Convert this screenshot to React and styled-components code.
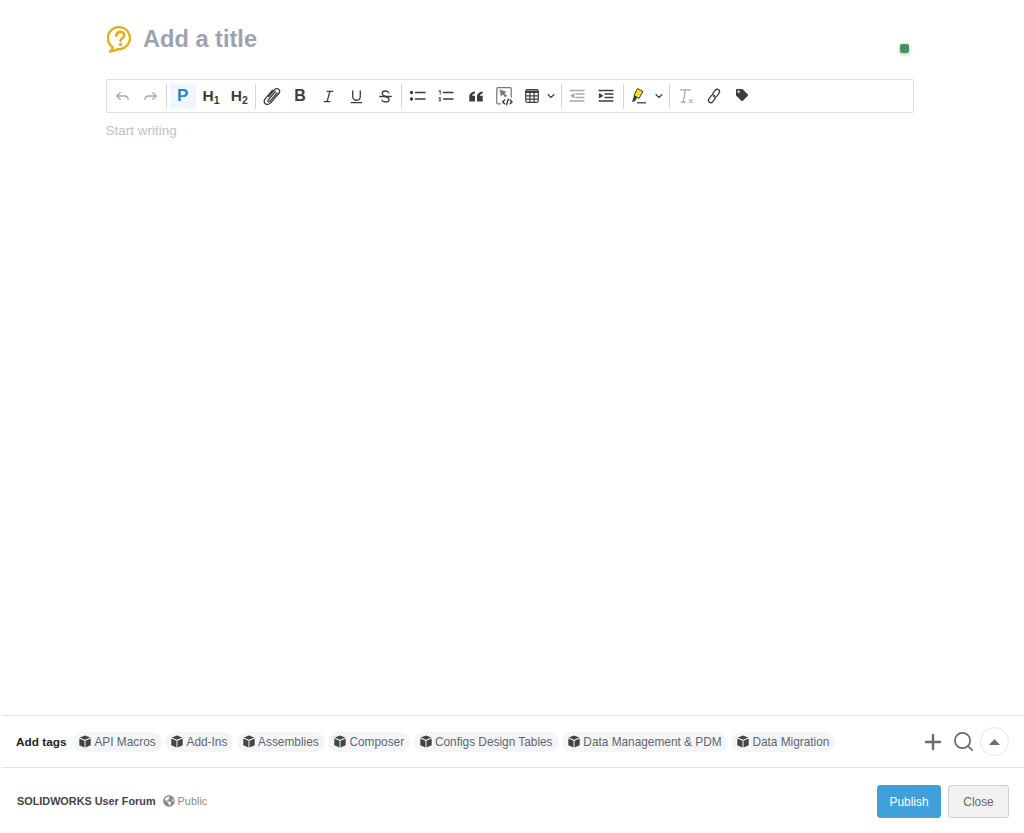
import React from 'react';
import styled, { createGlobalStyle } from 'styled-components';
import { FaGlobeAmericas, FaTag } from 'react-icons/fa';
import { Plus, Search, ChevronDown } from 'lucide-react';

const GlobalStyle = createGlobalStyle`
  html, body {
    margin: 0;
    padding: 0;
    background: #fff;
  }
  body {
    font-family: "Liberation Sans", Arial, sans-serif;
  }
`;

const Page = styled.div`
  position: relative;
  height: 833px;
  overflow: hidden;
  display: flex;
  flex-direction: column;
`;

const Editor = styled.main`
  flex: 1;
  padding: 24px 110px 0 106px;
`;

const TitleRow = styled.div`
  display: flex;
  align-items: center;
  gap: 10px;
  height: 30px;
  margin-bottom: 25px;
`;

const TitleIcon = styled.svg`
  width: 26px;
  height: 28px;
  margin-left: 1px;
  flex: none;
`;

const Title = styled.h1`
  margin: 0;
  font-size: 23.6px;
  font-weight: 700;
  color: #9ca3af;
`;

const StatusDot = styled.span`
  position: absolute;
  left: 900px;
  top: 44px;
  width: 9px;
  height: 9px;
  border-radius: 2px;
  background: #46925a;
  box-shadow: 0 1px 4px rgba(50, 120, 70, 0.45);
`;

const Toolbar = styled.div`
  display: flex;
  align-items: center;
  height: 34px;
  box-sizing: border-box;
  padding: 0 1px;
  border: 1px solid #dedede;
  border-radius: 2px;
  margin-bottom: 10px;
`;

const ToolButton = styled.button`
  display: flex;
  align-items: center;
  justify-content: ${(p) => (p.$split ? 'flex-start' : 'center')};
  gap: 6px;
  flex: none;
  width: ${(p) => p.$w || 28.4}px;
  height: 26px;
  margin-left: ${(p) => (p.$nudge ? 1 : 0)}px;
  padding: 0 0 ${(p) => p.$lift || 0}px ${(p) => p.$split || p.$pad || 0}px;
  border: 0;
  border-radius: 2px;
  background: ${(p) => (p.$active ? '#eff6fd' : 'transparent')};
  color: ${(p) => (p.$muted ? '#a8a8a8' : '#3d3d3d')};
  font-family: inherit;
`;

const Sep = styled.span`
  width: 1px;
  height: 25px;
  margin: 0 1.5px;
  flex: none;
  background: #d6d6d6;
`;

const Letter = styled.span`
  font-size: ${(p) => p.$size || 15.5}px;
  font-weight: 700;
  color: ${(p) => p.$color || '#3d3d3d'};
`;

const Sub = styled.sub`
  font-size: 10.5px;
  line-height: 0;
  vertical-align: -3px;
`;

const Placeholder = styled.p`
  margin: 0 0 0 -0.5px;
  font-size: 13.5px;
  color: #c0c0c0;
`;

const TagBar = styled.section`
  display: flex;
  align-items: center;
  height: 51px;
  margin-left: 2px;
  padding: 0 15px 0 14px;
  border-top: 1px solid #e2e2e2;
  border-bottom: 1px solid #e2e2e2;
`;

const TagLabel = styled.strong`
  font-size: 11.8px;
  color: #222;
  margin-right: 7px;
`;

const TagList = styled.div`
  display: flex;
  gap: 3.8px;
  flex: 1;
`;

const Tag = styled.span`
  display: flex;
  align-items: center;
  gap: 3px;
  height: 20px;
  padding: 0 6px;
  border-radius: 10px;
  background: #f4f5f7;
  font-size: 11.85px;
  color: #5f6670;
  white-space: nowrap;
`;

const CubeIcon = styled.svg`
  width: 12px;
  height: 13px;
  flex: none;
  fill: #444;
`;

const TagActions = styled.div`
  display: flex;
  align-items: center;
  gap: 7px;
  color: #6b6b6b;
`;

const RoundButton = styled.button`
  display: flex;
  align-items: center;
  justify-content: center;
  width: 29px;
  height: 29px;
  margin-left: -2px;
  padding: 0;
  border: 1px solid #e6e6e6;
  border-radius: 50%;
  background: #fff;
  color: #6e6e6e;
`;

const Footer = styled.footer`
  display: flex;
  align-items: center;
  height: 65px;
  box-sizing: border-box;
  padding: 0 15px 0 17px;
`;

const Forum = styled.span`
  font-size: 10.85px;
  font-weight: 700;
  color: #444;
`;

const Visibility = styled.span`
  display: flex;
  align-items: center;
  gap: 3px;
  margin-left: 7px;
  font-size: 10.9px;
  color: #8a8a8a;
  flex: 1;
`;

const FooterButton = styled.button`
  height: 33px;
  width: ${(p) => p.$w}px;
  margin: 2px 0 0 7px;
  padding: 0;
  border-radius: 3px;
  border: 1px solid ${(p) => (p.$primary ? '#3fa0da' : '#cfcfcf')};
  background: ${(p) => (p.$primary ? '#3fa0da' : '#f1f1f1')};
  color: ${(p) => (p.$primary ? '#fff' : '#666')};
  font-family: inherit;
  font-size: 11.9px;
`;

const Icon = ({ children, size = 18, sw = 1.4 }) => (
  <svg width={size} height={size} viewBox="0 0 18 18" fill="none" stroke="currentColor" strokeWidth={sw} strokeLinecap="round" strokeLinejoin="round">
    {children}
  </svg>
);

const Cube = () => (
  <CubeIcon viewBox="0 0 12 13">
    <path d="M6 .4 11.300 2.600 6 4.800.7 2.600z" />
    <path d="M.3 3.600 5.500 5.800v6.800L.3 10.200z" />
    <path d="M11.700 3.600 6.500 5.800v6.800l5.200-2.400z" />
  </CubeIcon>
);

const tags = ['API Macros', 'Add-Ins', 'Assemblies', 'Composer', 'Configs Design Tables', 'Data Management & PDM', 'Data Migration'];

export default function App() {
  return (
    <Page>
      <GlobalStyle />
      <Editor>
        <TitleRow>
          <TitleIcon viewBox="0 0 26 28" fill="none">
            <path d="M3 26.500c1.700-1.200 2.600-2.600 2.700-4.300A11 11 0 1 1 13.500 24c-3.300 0-6.500 1.800-10.500 2.500z" stroke="#e6ad1f" strokeWidth="2.400" strokeLinejoin="round" />
            <path d="M9.300 10.600c.2-2.300 1.800-3.700 4-3.700 2.300 0 4 1.400 4 3.300 0 3-3.800 3-3.800 5.600" stroke="#e6ad1f" strokeWidth="2.600" strokeLinecap="round" />
            <circle cx="13.500" cy="19.400" r="1.700" fill="#e6ad1f" />
          </TitleIcon>
          <Title>Add a title</Title>
        </TitleRow>
        <StatusDot />

        <Toolbar>
          <ToolButton $muted>
            <Icon size={17}>
              <path d="M6.500 5 3 8.500 6.500 12" />
              <path d="M3 8.500h8a4 4 0 0 1 4 3.500" />
            </Icon>
          </ToolButton>
          <ToolButton $muted>
            <Icon size={17}>
              <path d="M11.500 5 15 8.500 11.500 12" />
              <path d="M15 8.500H7a4 4 0 0 0-4 3.500" />
            </Icon>
          </ToolButton>
          <Sep />
          <ToolButton $active $nudge $w={26}><Letter $size={17} $color="#2b85c7">P</Letter></ToolButton>
          <ToolButton $nudge><Letter>H<Sub>1</Sub></Letter></ToolButton>
          <ToolButton><Letter>H<Sub>2</Sub></Letter></ToolButton>
          <Sep />
          <ToolButton>
            <Icon size={20} sw={1.200}>
              <path d="M6 9.500 11 3.600c1.200-1.400 3-1.500 4-.6 1.100 1 1 2.700-.1 4L8 15c-1.600 1.800-3.800 2-5 .9-1.300-1.100-1.200-3.200.300-5l6-7" />
              <path d="M12 5 5.800 12.300c-.6.700-.6 1.300-.2 1.700.5.400 1.100.3 1.700-.4L13.500 6.300" />
            </Icon>
          </ToolButton>
          <ToolButton><Letter $size={16}>B</Letter></ToolButton>
          <ToolButton>
            <Icon size={17}>
              <path d="M7.500 3.500h6M4.500 14.500h6M10.500 3.500l-3 11" />
            </Icon>
          </ToolButton>
          <ToolButton>
            <Icon size={17}>
              <path d="M5 3v6a4 4 0 0 0 8 0V3" />
              <path d="M3.500 15.500h11" />
            </Icon>
          </ToolButton>
          <ToolButton>
            <Icon size={17}>
              <path d="M3 9h12" />
              <path d="M12.500 5c-.6-1.200-2-1.800-3.500-1.800-2 0-3.500 1-3.500 2.700 0 1.200.8 2.200 3.500 3.100 2.700.8 3.700 1.800 3.700 3.100 0 1.800-1.700 2.700-3.700 2.700-1.700 0-3.200-.7-3.800-2" />
            </Icon>
          </ToolButton>
          <Sep />
          <ToolButton>
            <Icon sw={1.500}>
              <circle cx="2.500" cy="5.500" r=".9" fill="currentColor" />
              <circle cx="2.500" cy="12" r=".9" fill="currentColor" />
              <path d="M6.500 5.500h9.500M6.500 12h9.500" />
            </Icon>
          </ToolButton>
          <ToolButton>
            <Icon sw={1.500}>
              <path d="M2 4 3.200 3.400v3.600M1.800 10.800h1.800l-1.200 1.400 1.200 .5-.2 1.200H1.800" strokeWidth="1" />
              <path d="M6.500 5.500h9.500M6.500 12h9.500" />
            </Icon>
          </ToolButton>
          <ToolButton $pad={3}>
            <svg width="14" height="11" viewBox="0 0 14 11" fill="currentColor">
              <path d="M6 .6V2.300C4.500 2.700 3.500 3.500 3.200 4.700H6V10.500H.3V5.500C.3 3 2.500.9 6 .6zM13.700.6v1.700c-1.500.4-2.500 1.200-2.800 2.400h2.800v5.800H8V5.500C8 3 10.200.9 13.700.6z" />
            </svg>
          </ToolButton>
          <ToolButton $pad={2}>
            <Icon size={20} sw={1.100}>
              <path d="M6 16H3.500a1 1 0 0 1-1-1V2.500a1 1 0 0 1 1-1h11a1 1 0 0 1 1 1V10" stroke="#777" />
              <path d="M5.500 3.500 11 5.200l-2 1 2.500 2.800-1.500 1-2-2.800-1.500 1.500z" fill="#777" stroke="#777" strokeWidth=".5" />
              <path d="M9.500 12.500 7.800 14.300 9.500 16M14.500 12.500l1.700 1.800-1.700 1.700M12.800 11.800l-1.500 5" strokeWidth="1.300" />
            </Icon>
          </ToolButton>
          <ToolButton $w={42} $split={8}>
            <svg width="14" height="14" viewBox="0 0 14 14" fill="none" stroke="currentColor" strokeWidth="1.200">
              <rect x=".7" y=".7" width="12.600" height="12.600" rx="1.500" />
              <path d="M.7 2.800h12.600" strokeWidth="2.400" />
              <path d="M.7 6.800h12.600M.7 10.100h12.600M4.900 3.800v9.500M9.100 3.800v9.500" />
            </svg>
            <ChevronDown size={12} strokeWidth={2.200} />
          </ToolButton>
          <Sep />
          <ToolButton $muted>
            <Icon sw={1.300}>
              <path d="M2 3.500h14M8 7h8M8 10.500h8M2 14h14" />
              <path d="M6 7v3.500L3 8.800z" fill="currentColor" />
            </Icon>
          </ToolButton>
          <ToolButton $w={30}>
            <Icon sw={1.300}>
              <path d="M2 3.500h14M8 7h8M8 10.500h8M2 14h14" />
              <path d="M2.500 7v3.500l3-1.700z" fill="currentColor" />
            </Icon>
          </ToolButton>
          <Sep />
          <ToolButton $w={42} $split={3.500}>
            <svg width="18" height="18" viewBox="0 0 18 18" fill="none">
              <path d="M8.500 1.500 14 4.500 10 11.500 5 8.500z" fill="#f4e01c" stroke="#3d3d3d" strokeWidth="1" strokeLinejoin="round" />
              <path d="M5 8.500 3 15l3-.7L8 11 7.500 9.500z" fill="#3d3d3d" />
              <path d="M8 15.800h9" stroke="#3d3d3d" strokeWidth="1.300" />
            </svg>
            <ChevronDown size={12} strokeWidth={2.200} />
          </ToolButton>
          <Sep />
          <ToolButton $muted>
            <Icon size={20} sw={1.100}>
              <path d="M4 3.500h9M8.500 3.500 6.500 14.500M4.500 14.500h4" />
              <path d="m12 12.500 2.500 2.500M14.500 12.500 12 15" strokeWidth="1" />
            </Icon>
          </ToolButton>
          <ToolButton>
            <Icon sw={1.300}>
              <path d="M7.500 6.800 10.200 3.300c1-1.100 2.500-1.300 3.500-.5 1 .9 1.100 2.400.2 3.600l-2 2.700c-.9 1.100-2.400 1.300-3.300.5" />
              <path d="M10.500 11.200 7.800 14.700c-1 1.100-2.500 1.300-3.500.5-1-.9-1.100-2.400-.2-3.600l2-2.700c.9-1.100 2.400-1.300 3.300-.5" />
            </Icon>
          </ToolButton>
          <ToolButton $lift={2}><FaTag size={12} /></ToolButton>
        </Toolbar>

        <Placeholder>Start writing</Placeholder>
      </Editor>

      <TagBar>
        <TagLabel>Add tags</TagLabel>
        <TagList>
          {tags.map((t) => (
            <Tag key={t}><Cube />{t}</Tag>
          ))}
        </TagList>
        <TagActions>
          <Plus size={24} strokeWidth={2.400} />
          <Search size={23} strokeWidth={1.800} />
          <RoundButton>
            <svg width="11" height="6" viewBox="0 0 11 6" fill="currentColor">
              <path d="M5.500 0 11 6H0z" />
            </svg>
          </RoundButton>
        </TagActions>
      </TagBar>

      <Footer>
        <Forum>SOLIDWORKS User Forum</Forum>
        <Visibility><FaGlobeAmericas size={12} />Public</Visibility>
        <FooterButton $primary $w={64}>Publish</FooterButton>
        <FooterButton $w={61}>Close</FooterButton>
      </Footer>
    </Page>
  );
}
